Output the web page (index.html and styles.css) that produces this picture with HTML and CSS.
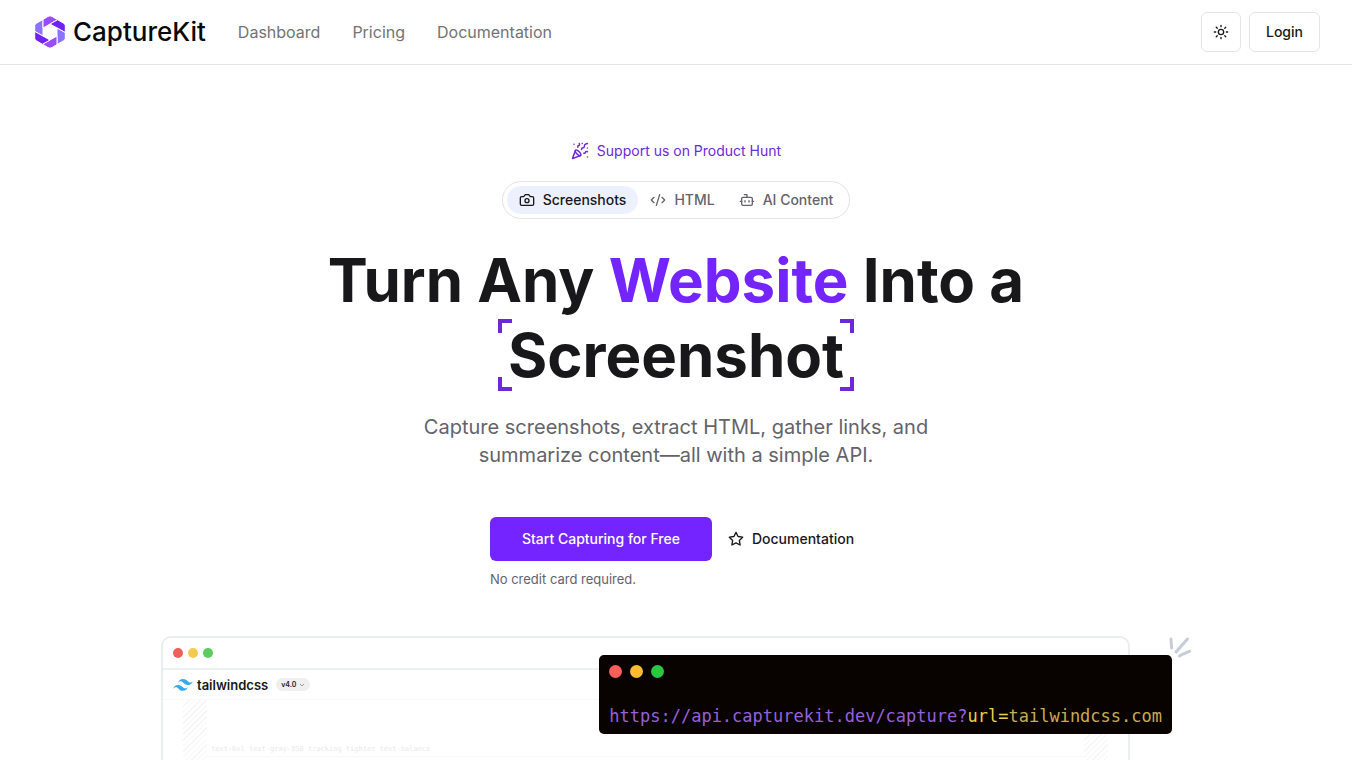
FILE: index.html
```html
<!DOCTYPE html>
<html lang="en">
<head>
<meta charset="UTF-8" />
<meta name="viewport" content="width=device-width, initial-scale=1" />
<title>CaptureKit</title>
<link rel="stylesheet" href="styles.css">
</head>
<body>

<header class="navbar">
  <a class="logo" href="#" aria-label="CaptureKit home">
    <svg width="30" height="32" viewBox="0 0 30 32" stroke="#fff">
      <path fill="#8b72ff" d="M8 3.500 L8 20 L-.3 15.400 L-.3 9.500 Q0 8 1.500 7.200 Z" />
      <path fill="#994dff" d="M8 3.500 L13 .4 Q15 -.8 17 .4 L22.600 3.700 L8 12 Z" />
      <path fill="#7220fb" d="M15 8 L22.600 3.700 L28.500 7.200 Q30 8 30.300 9.500 L30.300 16.600 Z" />
      <path fill="#8b72ff" d="M22 12 L30.300 16.600 L30.300 22.500 Q30 24 28.500 24.800 L22 28.500 Z" />
      <path fill="#994dff" d="M22 20 L22 28.500 L17 31.600 Q15 32.800 13 31.600 L7.400 28.300 Z" />
      <path fill="#7220fb" d="M15 24 L7.400 28.300 L1.500 24.800 Q0 24 -.3 22.500 L-.3 15.400 Z" />
    </svg>
    <span>CaptureKit</span>
  </a>
  <nav class="nav-links">
    <a href="#">Dashboard</a>
    <a href="#">Pricing</a>
    <a href="#">Documentation</a>
  </nav>
  <div class="nav-actions">
    <button class="btn-outline btn-icon" type="button" aria-label="Toggle theme">
      <svg class="icon" viewBox="0 0 24 24"><circle cx="12" cy="12" r="4"/><path d="M12 2v2M12 20v2M4.93 4.93l1.41 1.41M17.66 17.66l1.41 1.41M2 12h2M20 12h2M6.34 17.66l-1.41 1.41M19.07 4.93l-1.41 1.41"/></svg>
    </button>
    <button class="btn-outline" type="button">Login</button>
  </div>
</header>

<main class="hero">
  <a class="support" href="#">
    <svg class="icon" viewBox="0 0 24 24"><path d="M5.8 11.3 2 22l10.7-3.79M4 3h.01M22 8h.01M15 2h.01M22 20h.01M22 2l-2.24.75a2.9 2.9 0 0 0-1.96 3.12c.1.86-.57 1.63-1.45 1.63h-.38c-.86 0-1.6.6-1.76 1.44L14 10M22 13l-.82-.33c-.86-.34-1.82.2-1.98 1.11c-.11.7-.72 1.22-1.43 1.22H17M11 2l.33.82c.34.86-.2 1.82-1.11 1.98C9.52 4.9 9 5.52 9 6.23V7"/><path d="M11 13c1.93 1.93 2.83 4.17 2 5-.83.83-3.07-.07-5-2-1.93-1.93-2.83-4.17-2-5 .83-.83 3.07.07 5 2Z"/></svg>
    Support us on Product Hunt
  </a>

  <div class="tabs">
    <button class="tab active" type="button">
      <svg class="icon" viewBox="0 0 24 24"><path d="M14.5 4h-5L7 7H4a2 2 0 0 0-2 2v9a2 2 0 0 0 2 2h16a2 2 0 0 0 2-2V9a2 2 0 0 0-2-2h-3l-2.5-3z"/><circle cx="12" cy="13" r="3"/></svg>
      Screenshots
    </button>
    <button class="tab" type="button">
      <svg class="icon" viewBox="0 0 24 24"><path d="m18 16 4-4-4-4M6 8l-4 4 4 4M14.5 4l-5 16"/></svg>
      HTML
    </button>
    <button class="tab" type="button">
      <svg class="icon" viewBox="0 0 24 24"><path d="M12 8V4H8"/><rect width="16" height="12" x="4" y="8" rx="2"/><path d="M2 14h2M20 14h2M15 13v2M9 13v2"/></svg>
      AI Content
    </button>
  </div>

  <h1>Turn Any <span class="accent">Website</span> Into a<br><span class="framed">Screenshot<i class="corner tl"></i><i class="corner tr"></i><i class="corner bl"></i><i class="corner br"></i></span></h1>

  <p class="lead">Capture screenshots, extract HTML, gather links, and summarize content—all with a simple API.</p>

  <div class="cta">
    <div class="cta-row">
      <button class="btn-primary" type="button">Start Capturing for Free</button>
      <a class="btn-ghost" href="#">
        <svg class="icon" viewBox="0 0 24 24"><path d="M12 2l3.09 6.26L22 9.27l-5 4.87 1.18 6.88L12 17.77l-6.18 3.25L7 14.14 2 9.27l6.91-1.01L12 2z"/></svg>
        Documentation
      </a>
    </div>
    <p class="note">No credit card required.</p>
  </div>

  <div class="showcase">
    <div class="browser">
      <div class="browser-bar">
        <span class="dot red"></span><span class="dot yellow"></span><span class="dot green"></span>
      </div>
      <div class="site-bar">
        <svg width="20" height="12" viewBox="0 0 54 33"><path fill="#38a8e8" d="M27 0c-7.2 0-11.7 3.6-13.5 10.8 2.7-3.6 5.85-4.95 9.45-4.05 2.054.513 3.522 2.004 5.147 3.653C30.744 13.09 33.808 16.2 40.5 16.2c7.2 0 11.7-3.6 13.5-10.8-2.7 3.6-5.85 4.95-9.45 4.05-2.054-.513-3.522-2.004-5.147-3.653C36.756 3.11 33.692 0 27 0zM13.5 16.2C6.3 16.2 1.8 19.8 0 27c2.7-3.6 5.85-4.95 9.45-4.05 2.054.514 3.522 2.004 5.147 3.653C17.244 29.29 20.308 32.4 27 32.4c7.2 0 11.7-3.6 13.5-10.8-2.7 3.6-5.85 4.95-9.45 4.05-2.054-.513-3.522-2.004-5.147-3.653C23.256 19.31 20.192 16.2 13.5 16.2z"/></svg>
        <span class="site-name">tailwindcss</span>
        <span class="version">v4.0
          <svg width="6" height="4" viewBox="0 0 6 4"><path d="M1 1l2 2 2-2" fill="none" stroke="#999"/></svg>
        </span>
      </div>
      <div class="site-body">
        <div class="hatch"></div>
        <div class="site-content">text-6xl text-gray-950 tracking-tighter text-balance</div>
        <div class="hatch"></div>
      </div>
    </div>

    <div class="terminal">
      <div class="terminal-dots">
        <span class="dot red"></span><span class="dot yellow"></span><span class="dot green"></span>
      </div>
      <code>https://api.capturekit.dev/capture?<span class="param">url=</span><span class="value">tailwindcss.com</span></code>
    </div>

    <svg class="sparks" width="22" height="22" viewBox="0 0 22 22"><path d="M2 3l.6 9M7 16L18.500 3M10.500 20l4-2.200 6-2.500"/></svg>
  </div>
</main>

</body>
</html>
```
FILE: styles.css
```css
* {
  box-sizing: border-box;
}
body {
  margin: 0;
  font-family: Inter, "Liberation Sans", sans-serif;
  background: #fff;
  color: #18181b;
  display: flex;
  flex-direction: column;
  min-height: 100vh;
  font-size: 14px;
  line-height: 20px;
}
a {
  color: inherit;
  text-decoration: none;
}
button {
  font: inherit;
  color: inherit;
  border: none;
  background: none;
  cursor: pointer;
}
.icon {
  width: 16px;
  height: 16px;
  flex: none;
  fill: none;
  stroke: currentColor;
  stroke-width: 2;
  stroke-linecap: round;
  stroke-linejoin: round;
}

/* Navbar */
.navbar {
  display: flex;
  align-items: center;
  height: 65px;
  padding: 0 32px 0 35px;
  border-bottom: 1px solid #e4e4e7;
}
.logo {
  display: flex;
  align-items: center;
  gap: 8px;
  margin-right: 32px;
  font-size: 26px;
  font-weight: 500;
  color: #09090b;
}
.nav-links {
  display: flex;
  gap: 32px;
  font-size: 16px;
  color: #737373;
}
.nav-actions {
  display: flex;
  gap: 8px;
  margin-left: auto;
}
.btn-outline {
  display: flex;
  align-items: center;
  height: 40px;
  padding: 0 16px;
  border: 1px solid #e4e4e7;
  border-radius: 6px;
  font-weight: 500;
}
.btn-icon {
  width: 40px;
  justify-content: center;
  padding: 0;
}

/* Hero */
.hero {
  flex: 1;
  display: flex;
  flex-direction: column;
  align-items: center;
  padding: 76px 24px 0;
}
.support {
  display: flex;
  align-items: center;
  gap: 8px;
  color: #6d28d9;
}
.support .icon {
  width: 18px;
  height: 18px;
}
.tabs {
  display: flex;
  margin-top: 20px;
  padding: 4px;
  border: 1px solid #e4e4e7;
  border-radius: 19px;
}
.tab {
  display: flex;
  align-items: center;
  gap: 8px;
  height: 28px;
  padding: 0 12px;
  border-radius: 14px;
  font-weight: 500;
  color: #63636b;
}
.tab.active {
  background: #edf1ff;
  color: #18181b;
}
h1 {
  margin: 24px 0 0;
  font-size: 60px;
  line-height: 75px;
  font-weight: 700;
  text-align: center;
}
.accent {
  color: #7424ff;
}
.framed {
  position: relative;
  display: inline-block;
  padding: 0 8px;
}

/* Corner brackets round the word */
.corner {
  position: absolute;
  width: 14px;
  height: 14px;
  border: 0 solid #6d28d9;
}
.tl { top: 1px; left: -2px; border-width: 4px 0 0 4px; }
.tr { top: 1px; right: -2px; border-width: 4px 4px 0 0; }
.bl { bottom: 2px; left: -2px; border-width: 0 0 4px 4px; }
.br { bottom: 2px; right: -2px; border-width: 0 4px 4px 0; }

.lead {
  max-width: 576px;
  margin: 20px 0 0;
  font-size: 20px;
  line-height: 28px;
  text-align: center;
  color: #63636b;
}
.cta {
  margin-top: 48px;
}
.cta-row {
  display: flex;
  gap: 8px;
}
.btn-primary {
  height: 44px;
  padding: 0 32px;
  border-radius: 6px;
  background: #7424ff;
  color: #fff;
  font-weight: 500;
}
.btn-ghost {
  display: flex;
  align-items: center;
  gap: 8px;
  padding: 0 8px;
  font-weight: 500;
}
.note {
  margin: 8px 0 0;
  font-size: 13px;
  color: #63636b;
}

/* Browser mockup with the API call on top */
.showcase {
  flex: 1;
  display: flex;
  position: relative;
  width: 100%;
  max-width: 1030px;
  min-height: 120px;
  margin-top: 47px;
  padding-right: 61px;
}
.browser {
  flex: 1;
  display: flex;
  flex-direction: column;
  border: 2px solid #eaeeef;
  border-bottom: none;
  border-radius: 10px 10px 0 0;
}
.browser-bar {
  display: flex;
  align-items: center;
  gap: 5px;
  height: 32px;
  padding-left: 10px;
  border-bottom: 2px solid #edf1f2;
}
.dot {
  width: 10px;
  height: 10px;
  border-radius: 50%;
}
.red { background: #f0605a; }
.yellow { background: #f3cb50; }
.green { background: #5dcb61; }
.site-bar {
  display: flex;
  align-items: center;
  height: 30px;
  padding-left: 10px;
  border-bottom: 1px solid #f7f8f8;
}
.site-name {
  margin: 0 8px 0 4px;
  font-size: 13px;
  font-weight: 600;
}
.version {
  display: flex;
  align-items: center;
  gap: 3px;
  height: 13px;
  padding: 0 5px;
  border-radius: 7px;
  background: #efefef;
  font-size: 7px;
  font-weight: 600;
}
.site-body {
  flex: 1;
  display: flex;
  padding: 0 20px;
}
.hatch {
  width: 24px;
  background: repeating-linear-gradient(135deg, #f5f5f5 0 1px, #fff 1px 4px);
}
.site-content {
  flex: 1;
  height: 57px;
  padding: 39px 4px 0;
  border-bottom: 1px solid #f8f8f8;
  font-family: "DejaVu Sans Mono", monospace;
  font-size: 7px;
  color: #e9e9e9;
}
.terminal {
  position: absolute;
  top: 19px;
  right: 19px;
  height: 79px;
  padding: 10px;
  border-radius: 5px;
  background: #080200;
}
.terminal-dots {
  display: flex;
  gap: 8px;
  margin-bottom: 28px;
}
.terminal .dot {
  width: 13px;
  height: 13px;
}
.terminal .red { background: #ff5f57; }
.terminal .yellow { background: #febc2e; }
.terminal .green { background: #28c840; }
.terminal code {
  display: block;
  font-family: "DejaVu Sans Mono", monospace;
  font-size: 17px;
  line-height: 20px;
  white-space: nowrap;
  color: #9560dd;
}
.terminal .param { color: #e8d04c; }
.terminal .value { color: #c9aa55; }
.sparks {
  position: absolute;
  top: 0;
  right: 0;
  fill: none;
  stroke: #c6cdd9;
  stroke-width: 3;
  stroke-linecap: round;
}
```
